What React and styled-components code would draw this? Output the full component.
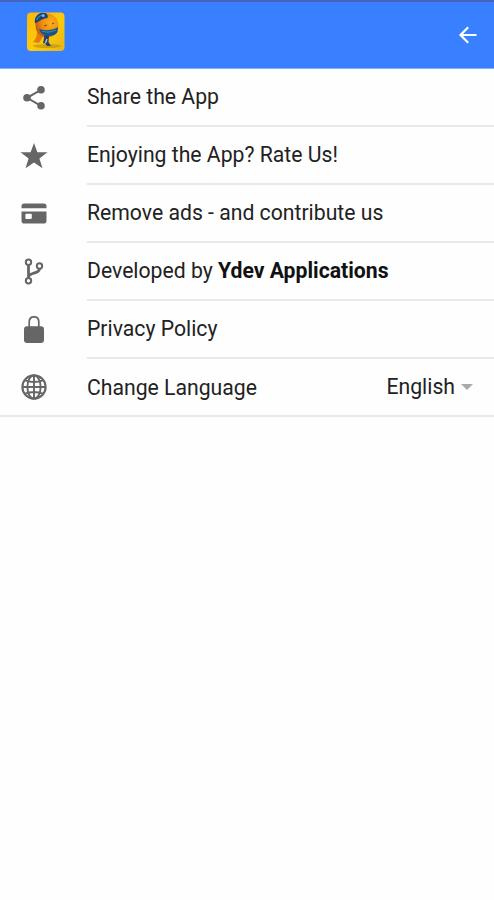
import React from "react";
import styled, { createGlobalStyle } from "styled-components";

const GlobalStyle = createGlobalStyle`
  body {
    margin: 0;
    background: #fefefe;
    font-family: Roboto, "Liberation Sans", sans-serif;
  }
`;

const Page = styled.div`
  min-height: 900px;
  background: #fefefe;
`;

const Header = styled.header`
  display: flex;
  align-items: center;
  justify-content: space-between;
  box-sizing: border-box;
  height: 69px;
  padding: 0 16px 8px 26px;
  border-top: 2px solid #4464c0;
  border-bottom: 1px solid #86b0fb;
  background: #3880ff;
`;

const Logo = styled.svg`
  display: block;
  width: 39px;
  height: 39px;
`;

const BackButton = styled.button`
  display: flex;
  margin: 7px 0 0;
  padding: 0;
  border: 0;
  background: none;
`;

const List = styled.ul`
  margin: 0;
  padding: 0;
  list-style: none;
  border-bottom: 2px solid #e8e8e8;
`;

const Row = styled.li`
  display: flex;
  height: ${props => (props.$last ? "56px" : "58px")};
`;

const IconCell = styled.span`
  display: flex;
  align-items: center;
  width: 87px;
  padding: 0 0 1px 20px;
  box-sizing: border-box;
  color: #666;
`;

const Content = styled.div`
  display: flex;
  flex: 1;
  align-items: center;
  justify-content: space-between;
  box-sizing: border-box;
  padding-top: ${props => (props.$last ? "2px" : "0")};
  padding-right: 21px;
  border-bottom: ${props => (props.$last ? "0" : "2px solid #e8e8e8")};
`;

const Label = styled.span`
  font-size: 21.2px;
  line-height: 26px;
  margin-top: -1px;
  color: #222;
  white-space: nowrap;

  b {
    color: #111;
  }
`;

const Select = styled.span`
  display: flex;
  align-items: center;
  margin-top: -2px;
`;

const Caret = styled.span`
  margin-left: 6px;
  border-left: 6px solid transparent;
  border-right: 6px solid transparent;
  border-top: 6px solid #a9a9a9;
`;

const Icon = ({ children }) => (
  <svg width="28" height="28" viewBox="0 0 28 28" fill="currentColor">
    {children}
  </svg>
);

const ShareIcon = () => (
  <Icon>
    <path d="M21 5.8 7 13.8l14 8" fill="none" stroke="currentColor" strokeWidth="2" />
    <circle cx="21" cy="5.8" r="3.8" />
    <circle cx="7" cy="13.8" r="3.8" />
    <circle cx="21" cy="21.8" r="3.8" />
  </Icon>
);

const StarIcon = () => (
  <Icon>
    <path d="M14 1l3.4 9.3h10.1l-8.1 6.2 3.1 9.8-8.5-5.8-8.5 5.8 3.1-9.8-8.1-6.2h10.1z" />
  </Icon>
);

const CardIcon = () => (
  <Icon>
    <path d="M1.5 8.3V6.400a2.8 2.8 0 0 1 2.8-2.8h19.4a2.8 2.8 0 0 1 2.8 2.8v1.9z" />
    <path
      fillRule="evenodd"
      d="M1.5 11.500h25v9.2a2.8 2.8 0 0 1-2.8 2.8H4.3a2.8 2.8 0 0 1-2.8-2.8zm4.8 2.2a.9.9 0 0 0-.9.9v3.4c0 .5.4.9.9.9h4.6c.5 0 .9-.4.9-.9v-3.4a.9.9 0 0 0-.9-.9z"
    />
  </Icon>
);

const BranchIcon = () => (
  <Icon>
    <g fill="none" stroke="currentColor" strokeWidth="2">
      <circle cx="8.500" cy="4.300" r="2.7" />
      <circle cx="8.500" cy="22.800" r="2.7" />
      <circle cx="19.500" cy="8" r="2.7" />
      <path strokeWidth="2.8" d="M8.500 7.300v12.500M19.500 10.800c0 5.500-10.200 3.200-10.900 8" />
    </g>
  </Icon>
);

const LockIcon = () => (
  <Icon>
    <path
      d="M9.2 11.500V6c0-3.2 1.9-5.2 4.8-5.2s4.8 2 4.8 5.2v5.500"
      fill="none"
      stroke="currentColor"
      strokeWidth="1.7"
    />
    <rect x="4" y="10.300" width="20" height="16.8" rx="3" />
  </Icon>
);

const GlobeIcon = () => (
  <Icon>
    <g fill="none" stroke="currentColor" strokeWidth="1.9">
      <circle cx="14" cy="14" r="11.6" strokeWidth="2.1" />
      <ellipse cx="14" cy="14" rx="6.6" ry="11.6" />
      <path d="M14 2.3v23.4M2.3 14h23.4M5.3 7.3c5 2.3 12.4 2.3 17.4 0M5.3 20.7c5-2.3 12.4-2.3 17.4 0" />
    </g>
  </Icon>
);

// Small mascot: orange round body with a blue cap and scarf
const AppLogo = () => (
  <Logo viewBox="0 0 39 39">
    <defs>
      <linearGradient id="tile" x1="0" y1="0" x2="1" y2="1">
        <stop offset="0" stopColor="#f8b709" />
        <stop offset="0.55" stopColor="#fccb08" />
        <stop offset="1" stopColor="#e7b51a" />
      </linearGradient>
      <radialGradient id="body" cx="0.7" cy="0.4" r="0.7">
        <stop offset="0" stopColor="#fcb01a" />
        <stop offset="0.6" stopColor="#f08c10" />
        <stop offset="1" stopColor="#c45a13" />
      </radialGradient>
      <clipPath id="corner">
        <rect x="1" y="0.5" width="37.5" height="38.5" rx="4" />
      </clipPath>
    </defs>
    <g clipPath="url(#corner)">
      <rect width="39" height="39" fill="url(#tile)" />
      <ellipse cx="21" cy="34" rx="14" ry="2" fill="#b58a16" opacity="0.6" />
      <path d="M11 18c0 6-1 9-4 12l6 1 5-8z" fill="#e57a10" />
      <ellipse cx="21" cy="13.5" rx="11.5" ry="12" fill="url(#body)" />
      <path d="M13 17c6 2 13 1.500 19-2l-.5 5c-2 3-5 4-9 4-4 0-8-2-9.500-7z" fill="#175589" />
      <path d="M16 19c4 1.500 10 1 14-1" stroke="#398cb0" strokeWidth="1.3" fill="none" />
      <path d="M9 11.500C8 6 11 2 15 1c5-1.300 7.500 1 6.500 5-4 0-8 2.500-12.500 5.500z" fill="#124276" />
      <path d="M10.5 8c1.500-3 3-4 5-5" stroke="#3b86b0" strokeWidth="1.3" fill="none" />
      <circle cx="17.2" cy="3.500" r="1.5" fill="#92b4d2" />
      <path d="M18 14l3-1M26 12l2-1" stroke="#79501b" strokeWidth="1.2" />
      <path d="M18.500 23l4.500 1-.5 6 2.500 4h-4l-2-3-2 .5z" fill="#25416f" />
      <path d="M21 27l-1.500 4" stroke="#b6c2d6" strokeWidth="1.4" />
    </g>
  </Logo>
);

const items = [
  { id: "share", icon: <ShareIcon />, label: "Share the App" },
  { id: "rate", icon: <StarIcon />, label: "Enjoying the App? Rate Us!" },
  { id: "ads", icon: <CardIcon />, label: "Remove ads - and contribute us" },
  {
    id: "dev",
    icon: <BranchIcon />,
    label: (
      <>
        Developed by <b>Ydev Applications</b>
      </>
    )
  },
  { id: "privacy", icon: <LockIcon />, label: "Privacy Policy" },
  { id: "language", icon: <GlobeIcon />, label: "Change Language", value: "English" }
];

const App = () => (
  <Page>
    <GlobalStyle />
    <Header>
      <AppLogo />
      <BackButton aria-label="Back">
        <svg width="20" height="20" viewBox="0 0 20 20" fill="none" stroke="#fff" strokeWidth="2.2">
          <path d="M10.2 2.3 2.5 10l7.7 7.7M2.5 10h16" />
        </svg>
      </BackButton>
    </Header>
    <List>
      {items.map((x, i) => {
        const last = i === items.length - 1;
        return (
          <Row key={x.id} $last={last}>
            <IconCell>{x.icon}</IconCell>
            <Content $last={last}>
              <Label>{x.label}</Label>
              {x.value && (
                <Select>
                  <Label>{x.value}</Label>
                  <Caret />
                </Select>
              )}
            </Content>
          </Row>
        );
      })}
    </List>
  </Page>
);

export default App;
